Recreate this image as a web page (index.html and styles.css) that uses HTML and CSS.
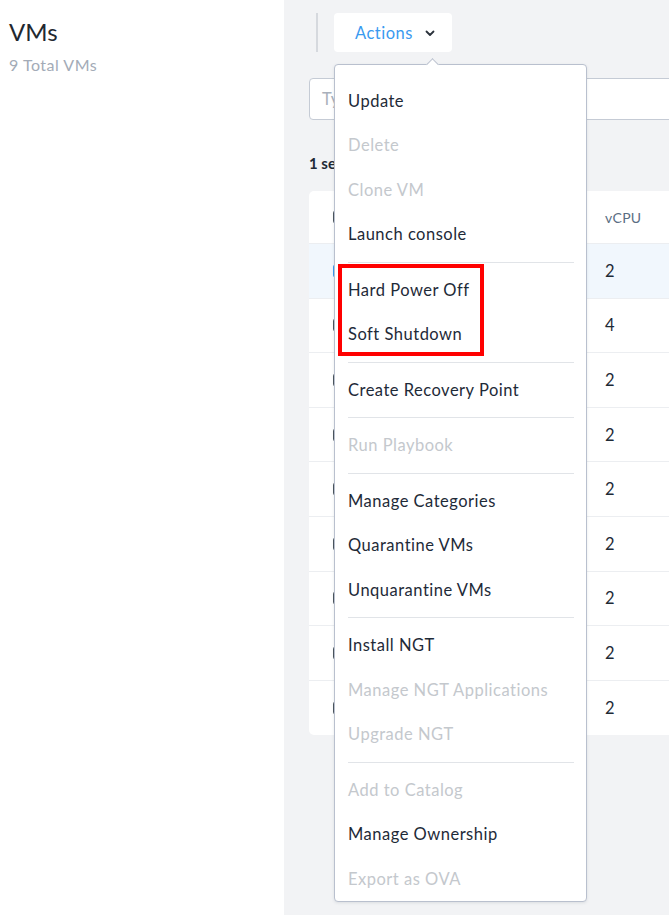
FILE: index.html
```html
<!DOCTYPE html>
<html>
<head>
<meta charset="utf-8">
<link rel="stylesheet" href="styles.css">
</head>
<body>
<div class="page">
  <aside class="side">
    <h1 class="title">VMs</h1>
    <div class="subtitle">9 Total VMs</div>
  </aside>
  <main class="main">
    <div class="toolbar">
      <span class="vsep"></span>
      <div class="actions-wrap">
        <button class="actions-btn">Actions
          <svg class="chev" width="10" height="7" viewBox="0 0 10 7"><path d="M1.5 1.5 L5 5 L8.5 1.5" fill="none" stroke="#2b323b" stroke-width="1.8" stroke-linecap="round" stroke-linejoin="round"/></svg>
        </button>
        <div class="menu">
          <span class="caret"></span>
          <div class="item">Update</div>
          <div class="item off">Delete</div>
          <div class="item off">Clone VM</div>
          <div class="item">Launch console</div>
          <div class="divider"></div>
          <div class="item">Hard Power Off</div>
          <div class="item">Soft Shutdown</div>
          <div class="divider"></div>
          <div class="item">Create Recovery Point</div>
          <div class="divider"></div>
          <div class="item off">Run Playbook</div>
          <div class="divider"></div>
          <div class="item">Manage Categories</div>
          <div class="item">Quarantine VMs</div>
          <div class="item">Unquarantine VMs</div>
          <div class="divider"></div>
          <div class="item">Install NGT</div>
          <div class="item off">Manage NGT Applications</div>
          <div class="item off">Upgrade NGT</div>
          <div class="divider"></div>
          <div class="item off">Add to Catalog</div>
          <div class="item">Manage Ownership</div>
          <div class="item off">Export as OVA</div>
          <span class="highlight"></span>
        </div>
      </div>
    </div>
    <div class="search"><span class="placeholder">Type name to filter</span></div>
    <div class="selected">1 selected out of 9 VMs</div>
    <div class="card">
      <div class="row head"><span class="cb"></span><span class="col">vCPU</span></div>
      <div class="row sel"><span class="cb on"></span><span class="col">2</span></div>
      <div class="row"><span class="cb"></span><span class="col">4</span></div>
      <div class="row"><span class="cb"></span><span class="col">2</span></div>
      <div class="row"><span class="cb"></span><span class="col">2</span></div>
      <div class="row"><span class="cb"></span><span class="col">2</span></div>
      <div class="row"><span class="cb"></span><span class="col">2</span></div>
      <div class="row"><span class="cb"></span><span class="col">2</span></div>
      <div class="row"><span class="cb"></span><span class="col">2</span></div>
      <div class="row last"><span class="cb"></span><span class="col">2</span></div>
    </div>
  </main>
</div>
</body>
</html>
```
FILE: styles.css
```css
* { box-sizing: border-box; }
html, body { margin: 0; padding: 0; }
body {
  width: 669px;
  height: 915px;
  overflow: hidden;
  font-family: Lato, "Noto Sans", sans-serif;
  color: #1e2a36;
  background: #f2f3f5;
}
.page { display: flex; height: 915px; }
.side {
  width: 284px;
  flex: none;
  background: #ffffff;
  padding: 17px 9px;
}
.title {
  margin: 0;
  font-size: 24px;
  font-weight: 400;
  line-height: 30px;
  color: #22282f;
}
.subtitle {
  margin-top: 8px;
  font-size: 16px;
  letter-spacing: 0.5px;
  line-height: 20px;
  color: #a3abb7;
}
.main {
  flex: 1;
  min-width: 0;
  overflow: hidden;
  padding-left: 25px;
  padding-top: 13px;
}
.toolbar {
  display: flex;
  align-items: flex-start;
  height: 39px;
  position: relative;
  z-index: 5;
}
.vsep {
  width: 2px;
  height: 39px;
  background: #d6d9de;
  margin-left: 7px;
  margin-right: 16px;
}
.actions-wrap { position: relative; }
.actions-btn {
  display: flex;
  align-items: center;
  width: 118px;
  height: 39px;
  border: none;
  border-radius: 4px;
  background: #ffffff;
  padding: 0 0 0 21px;
  font-family: Lato, "Noto Sans", sans-serif;
  font-size: 16.5px;
  letter-spacing: 0.5px;
  color: #3a9af0;
  cursor: pointer;
}
.chev { margin-left: 12px; margin-top: 1px; }
.menu {
  position: absolute;
  left: 0;
  top: 51px;
  width: 253px;
  background: #ffffff;
  border: 1px solid #b9c0ce;
  border-radius: 4px;
  padding: 13.5px 0 0 0;
  box-shadow: 0 1px 3px rgba(60, 70, 90, 0.12);
}
.caret {
  position: absolute;
  top: -5px;
  left: 93px;
  width: 9px;
  height: 9px;
  background: #ffffff;
  border-top: 1px solid #b9c0ce;
  border-left: 1px solid #b9c0ce;
  transform: rotate(45deg);
}
.item {
  height: 44.5px;
  display: flex;
  align-items: center;
  padding-left: 13px;
  font-size: 16.5px;
  letter-spacing: 0.5px;
  color: #1e2a38;
  white-space: nowrap;
}
.item.off { color: #c4c8cd; }
.divider {
  height: 1px;
  background: #e1e4e8;
  margin: 5px 12px 5px 13px;
}
.highlight {
  position: absolute;
  left: 3px;
  top: 199px;
  width: 146px;
  height: 92px;
  border: 4px solid #ff0000;
}
.search {
  margin-top: 26px;
  height: 42px;
  width: 420px;
  background: #ffffff;
  border: 1px solid #c5cbd5;
  border-radius: 4px;
  padding-left: 12px;
  display: flex;
  align-items: center;
  font-size: 16.5px;
  letter-spacing: 0.5px;
  color: #a9b0bb;
}
.selected {
  margin-top: 33px;
  font-size: 15px;
  font-weight: 700;
  color: #1e2a36;
  line-height: 20px;
  white-space: nowrap;
}
.card {
  margin-top: 18px;
  width: 420px;
  background: #ffffff;
  border-radius: 5px;
  overflow: hidden;
}
.row {
  display: flex;
  align-items: center;
  height: 54.6px;
  border-bottom: 1px solid #eceef1;
  font-size: 16.5px;
  color: #1e2a36;
}
.row.head { height: 53px; font-size: 14px; letter-spacing: 0.3px; color: #5a6d83; }
.row.sel { background: #f1f7fd; }
.row.last { border-bottom: none; }
.cb {
  margin-left: 24px;
  width: 14px;
  height: 14px;
  border: 1.5px solid #4b545e;
  border-radius: 3px;
  flex: none;
}
.cb.on { border-color: #3a9af0; background: #3a9af0; }
.col { margin-left: 258px; flex: none; }
```
